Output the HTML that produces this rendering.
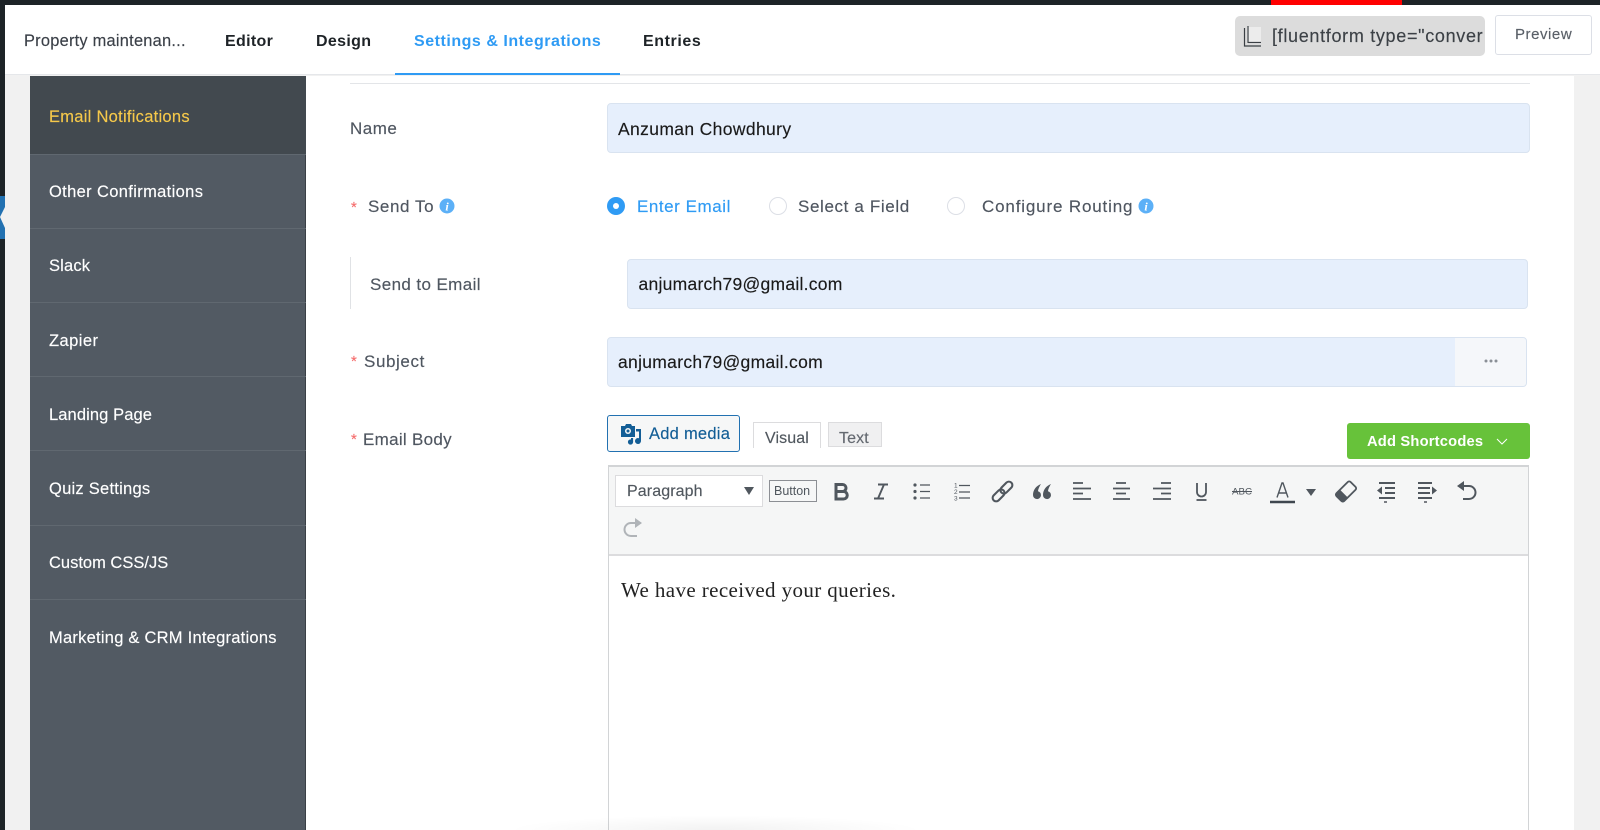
<!DOCTYPE html>
<html><head><meta charset="utf-8"><title>Email Notifications</title>
<style>
html,body{margin:0;padding:0;background:#f1f1f1}
#p{position:relative;width:1600px;height:830px;overflow:hidden;background:#f1f1f1;font-family:"Liberation Sans",sans-serif;color:#555d66;filter:blur(.3px)}
#p div,#p span.t{position:absolute;box-sizing:border-box}
.t{white-space:nowrap;line-height:20px;font-size:17px;-webkit-text-stroke:.15px currentColor}
.b{font-weight:bold;color:#1e2327;font-size:16px;-webkit-text-stroke:0}
.s{color:#fff;font-size:16.5px;left:49px}
.l{color:#4f5660;font-size:17px}
.in{background:#e6effc;border:1px solid #d9e3f0;border-radius:4px}
.v{color:#1a1a1a;font-size:17.5px}
.r{color:#f56c6c;font-size:15px}
.sep{left:30px;width:276px;height:1px;background:#606870}
svg{position:absolute;overflow:visible}
</style></head><body><div id="p">
<div style="left:0;top:0;width:1600px;height:5px;background:#1d2327"></div>
<div style="left:1271px;top:0;width:131px;height:5px;background:#f00"></div>
<div style="left:0;top:0;width:5px;height:830px;background:#1d2327"></div>
<div style="left:0;top:196px;width:5px;height:43px;background:#2271b1"></div>
<svg style="left:0;top:0" width="6" height="830"><path d="M5 207L0 217L5 228Z" fill="#f1f1f1"/></svg>

<div style="left:5px;top:5px;width:1595px;height:70px;background:#fff;border-bottom:1px solid #e5e7ea"></div>
<span class="t" style="left:24px;top:31px;font-size:16.4px;color:#3b4048;letter-spacing:.24px">Property maintenan...</span>
<span class="t b" style="left:225px;top:32px;letter-spacing:.33px">Editor</span>
<span class="t b" style="left:316px;top:32px;letter-spacing:.33px">Design</span>
<span class="t b" style="left:414px;top:32px;color:#2f9bf4;letter-spacing:.53px">Settings &amp; Integrations</span>
<span class="t b" style="left:643px;top:32px;letter-spacing:.58px">Entries</span>
<div style="left:395px;top:73px;width:225px;height:2px;background:#2f9bf4"></div>

<div style="left:1235px;top:16px;width:250px;height:40px;background:#dcdcdc;border-radius:5px"></div>
<svg style="left:1241px;top:25px" width="24" height="24"><rect x="6" y="2" width="14" height="17" fill="#ececec"/><path d="M3.500 3V21H20M7 1V17.500H20" fill="none" stroke="#3a3f44" stroke-width="1.200"/></svg>
<span class="t" style="left:1272px;top:26px;font-size:18px;color:#3c4146;width:212px;overflow:hidden;letter-spacing:.68px">[fluentform type="conver</span>
<div style="left:1495px;top:15px;width:97px;height:40px;background:#fff;border:1px solid #dcdfe6;border-radius:3px"></div>
<span class="t" style="left:1515px;top:25px;font-size:15px;color:#5a6068;letter-spacing:.55px">Preview</span>

<div style="left:30px;top:76px;width:276px;height:754px;background:#525a63;border-right:1px solid #3a4046"></div>
<div style="left:30px;top:76px;width:276px;height:78px;background:#42494f"></div>
<div class="sep" style="top:154px"></div><div class="sep" style="top:228px"></div><div class="sep" style="top:302px"></div><div class="sep" style="top:376px"></div><div class="sep" style="top:450px"></div><div class="sep" style="top:525px"></div><div class="sep" style="top:599px"></div>
<span class="t s" style="top:107px;color:#f5c84a;letter-spacing:.27px">Email Notifications</span>
<span class="t s" style="top:182px;letter-spacing:.35px">Other Confirmations</span>
<span class="t s" style="top:256px;letter-spacing:.17px">Slack</span>
<span class="t s" style="top:331px;letter-spacing:.44px">Zapier</span>
<span class="t s" style="top:405px;letter-spacing:.1px">Landing Page</span>
<span class="t s" style="top:479px;letter-spacing:.25px">Quiz Settings</span>
<span class="t s" style="top:553px">Custom CSS/JS</span>
<span class="t s" style="top:628px;letter-spacing:.24px">Marketing &amp; CRM Integrations</span>

<div style="left:306px;top:76px;width:1268px;height:754px;background:#fff"></div>
<div style="left:350px;top:83px;width:1180px;height:1px;background:#e3e5e8"></div>

<span class="t l" style="left:350px;top:119px;letter-spacing:.5px">Name</span>
<div class="in" style="left:607px;top:103px;width:923px;height:50px"></div>
<span class="t v" style="left:618px;top:119px;letter-spacing:.36px">Anzuman Chowdhury</span>

<span class="t r" style="left:351px;top:198px">*</span>
<span class="t l" style="left:368px;top:197px;letter-spacing:.58px">Send To</span>
<svg style="left:439px;top:198px" width="16" height="16"><circle cx="8" cy="8" r="7.500" fill="#5cb0f7"/><text x="8" y="12.500" text-anchor="middle" font-family="Liberation Serif,serif" font-style="italic" font-weight="bold" font-size="12" fill="#fff">i</text></svg>
<div style="left:607px;top:197px;width:18px;height:18px;border-radius:50%;background:#2f9bf4"></div>
<div style="left:613px;top:203px;width:6px;height:6px;border-radius:50%;background:#fff"></div>
<span class="t" style="left:637px;top:197px;color:#2f9bf4;letter-spacing:.55px">Enter Email</span>
<div style="left:769px;top:197px;width:18px;height:18px;border-radius:50%;border:1px solid #dcdfe6;background:#fff"></div>
<span class="t l" style="left:798px;top:197px;letter-spacing:.63px">Select a Field</span>
<div style="left:947px;top:197px;width:18px;height:18px;border-radius:50%;border:1px solid #dcdfe6;background:#fff"></div>
<span class="t l" style="left:982px;top:197px;letter-spacing:.84px">Configure Routing</span>
<svg style="left:1138px;top:198px" width="16" height="16"><circle cx="8" cy="8" r="7.500" fill="#5cb0f7"/><text x="8" y="12.500" text-anchor="middle" font-family="Liberation Serif,serif" font-style="italic" font-weight="bold" font-size="12" fill="#fff">i</text></svg>

<div style="left:350px;top:257px;width:1px;height:52px;background:#e0e2e5"></div>
<span class="t l" style="left:370px;top:275px;letter-spacing:.39px">Send to Email</span>
<div class="in" style="left:627px;top:259px;width:901px;height:50px"></div>
<span class="t v" style="left:638.500px;top:274px;letter-spacing:.26px">anjumarch79@gmail.com</span>

<span class="t r" style="left:351px;top:352px">*</span>
<span class="t l" style="left:364px;top:352px;letter-spacing:.6px">Subject</span>
<div class="in" style="left:607px;top:337px;width:920px;height:50px;overflow:hidden"><div style="right:0;top:0;width:71px;height:48px;background:#f5f7fa"></div></div>
<span class="t v" style="left:618px;top:352px;letter-spacing:.3px">anjumarch79@gmail.com</span>
<svg style="left:1483px;top:358px" width="18" height="6"><g fill="#8a8f96"><circle cx="3" cy="3" r="1.500"/><circle cx="8" cy="3" r="1.500"/><circle cx="13" cy="3" r="1.500"/></g></svg>

<span class="t r" style="left:351px;top:430px">*</span>
<span class="t l" style="left:363px;top:430px;letter-spacing:.3px">Email Body</span>

<div style="left:607px;top:415px;width:133px;height:37px;background:#f6f7f7;border:1px solid #2271b1;border-radius:3px"></div>
<svg style="left:619px;top:423px" width="24" height="24" fill="#135e96"><path d="M2 3h4l1-2h5l1 2h3v11H2z" fill-rule="evenodd"/><circle cx="9" cy="8" r="3" fill="#f6f7f7"/><circle cx="9" cy="8" r="1.500"/><path d="M17 6h5v12a3 3 0 1 1-2-2.800V8.500h-3z"/><circle cx="11.500" cy="19" r="2.600"/><path d="M12 15h2.100v4h-2.100z"/></svg>
<span class="t" style="left:649px;top:424px;font-size:16.500px;color:#135e96;letter-spacing:.25px">Add media</span>
<div style="left:753px;top:422px;width:68px;height:26px;background:#fff;border:1px solid #dcdcde;border-bottom:0"></div>
<span class="t" style="left:765px;top:428.500px;font-size:16px;color:#50575e;letter-spacing:.1px">Visual</span>
<div style="left:828px;top:422px;width:54px;height:25px;background:#f0f0f1;border:1px solid #dcdcde"></div>
<span class="t" style="left:839px;top:428.500px;font-size:16px;color:#646970;letter-spacing:.1px">Text</span>

<div style="left:1347px;top:423px;width:183px;height:36px;background:#67c23a;border-radius:3px"></div>
<span class="t" style="left:1367px;top:431.500px;font-size:14.700px;font-weight:bold;color:#fff;letter-spacing:.2px;-webkit-text-stroke:0">Add Shortcodes</span>
<svg style="left:1496px;top:438px" width="12" height="7"><path d="M1 1L6 6L11 1" fill="none" stroke="#fff" stroke-width="1"/></svg>

<div style="left:608px;top:465px;width:921px;height:370px;background:#fff;border:1px solid #d2d4d6;border-width:2px 1px 1px 1px"></div>
<div style="left:609px;top:467px;width:919px;height:89px;background:#f5f6f6;border-bottom:2px solid #dcdcde"></div>
<div style="left:615px;top:475px;width:148px;height:32px;background:#fff;border:1px solid #dcdcde"></div>
<span class="t" style="left:627px;top:481.500px;font-size:16px;color:#50575e;letter-spacing:.1px">Paragraph</span>
<svg style="left:744px;top:487px" width="11" height="9"><path d="M0 0H10L5 8Z" fill="#50575e"/></svg>
<div style="left:769px;top:480px;width:48px;height:22px;border:1px solid #8c8f94;background:#f6f7f7"></div>
<span class="t" style="left:774px;top:481px;font-size:12.500px;color:#50575e;-webkit-text-stroke:0">Button</span>

<svg style="left:820px;top:470px" width="680" height="40" fill="none" stroke="#50575e">
<path d="M16 14.500h6.500a3.500 3.500 0 0 1 0 7h-6.500zM16 21.500h7.500a3.700 3.700 0 0 1 0 7.500h-7.500z" stroke-width="3"/>
<path d="M58 14.500h10M54 28.500h10M64 14.500L58 28.500" stroke-width="1.900"/>
<g fill="#50575e" stroke="none"><circle cx="95" cy="15" r="1.600"/><circle cx="95" cy="21.500" r="1.600"/><circle cx="95" cy="28" r="1.600"/></g>
<path d="M100 15h10M100 21.500h10M100 28h10" stroke-width="1.300"/>
<g font-family="Liberation Sans,sans-serif" font-size="6.500" fill="#50575e" stroke="none"><text x="134" y="17.500">1</text><text x="134" y="24">2</text><text x="134" y="30.500">3</text></g>
<path d="M139 15.500h11M139 22h11M139 28h11" stroke-width="1.300"/>
<g transform="translate(182.500 21.500) rotate(-45)" stroke-width="2.100"><rect x="-12.500" y="-3.500" width="14" height="7" rx="3.500"/><rect x="-1.500" y="-3.500" width="14" height="7" rx="3.500"/></g>
<path d="M221 14C216 16 213 20 213 25a4 4 0 1 0 5-3.800C218 20 219 17 221 14zM231 14C226 16 223 20 223 25a4 4 0 1 0 5-3.800C228 20 229 17 231 14z" fill="#50575e" stroke="none"/>
<path d="M253 13h10M253 18.500h18M253 23.500h10M253 29h18" stroke-width="1.800"/>
<path d="M296 13h10M293 18.500h17M296 23.500h10M293 29h17" stroke-width="1.800"/>
<path d="M341 13h10M333 18.500h18M341 23.500h10M333 29h18" stroke-width="1.800"/>
<path d="M377 13v9a4.500 4.500 0 0 0 9 0v-9" stroke-width="1.800"/><path d="M376.500 30h10" stroke-width="1.800"/>
<text x="412" y="24.500" font-family="Liberation Sans,sans-serif" font-size="9.500" fill="#50575e" stroke="none" textLength="20" lengthAdjust="spacingAndGlyphs">ABC</text>
<path d="M412 21.500h20" stroke-width=".9"/>
<path d="M457 27.500L462 13h1L468 27.500M459 23h8" stroke-width="1.400"/>
<path d="M450 32h25" stroke-width="2.600" stroke="#3f474f"/>
<path d="M486 19h10L491 26Z" fill="#50575e" stroke="none"/>
<g transform="translate(526 21.500) rotate(45)"><rect x="-5.500" y="-10" width="11" height="20" rx="2" stroke-width="1.800"/><rect x="-5.500" y="3" width="11" height="7" fill="#50575e" stroke="none"/></g>
<path d="M559 13h16M565 18h10M565 23h10M559 28h16" stroke-width="2"/><path d="M557 20.500l5-4v8z" fill="#50575e" stroke="none"/><path d="M564 32h3" stroke-width="1.500"/>
<path d="M598 13h14M598 18h12M598 23h12M598 28h14" stroke-width="2"/><path d="M617 20.500l-5-4v8z" fill="#50575e" stroke="none"/><path d="M604 32h3" stroke-width="1.500"/>
<path d="M639 16h10a6 6 0 0 1 0 13h-6" stroke-width="2"/><path d="M644 11l-7 5 7 5z" fill="#50575e" stroke="none"/>
</svg>
<svg style="left:621px;top:518px" width="24" height="20" fill="none" stroke="#b0b4b8"><path d="M20 5h-10a6 6 0 0 0 0 13h6" stroke-width="2"/><path d="M14 0l7 5-7 5z" fill="#b0b4b8" stroke="none"/></svg>

<span class="t" style="left:621px;top:580px;font-size:21px;font-family:'Liberation Serif',serif;color:#222;letter-spacing:.39px;-webkit-text-stroke:0">We have received your queries.</span>

<div style="left:505px;top:815px;width:420px;height:15px;background:radial-gradient(ellipse at 50% 100%,rgba(0,0,0,.05),rgba(0,0,0,0) 70%)"></div>
</div></body></html>
